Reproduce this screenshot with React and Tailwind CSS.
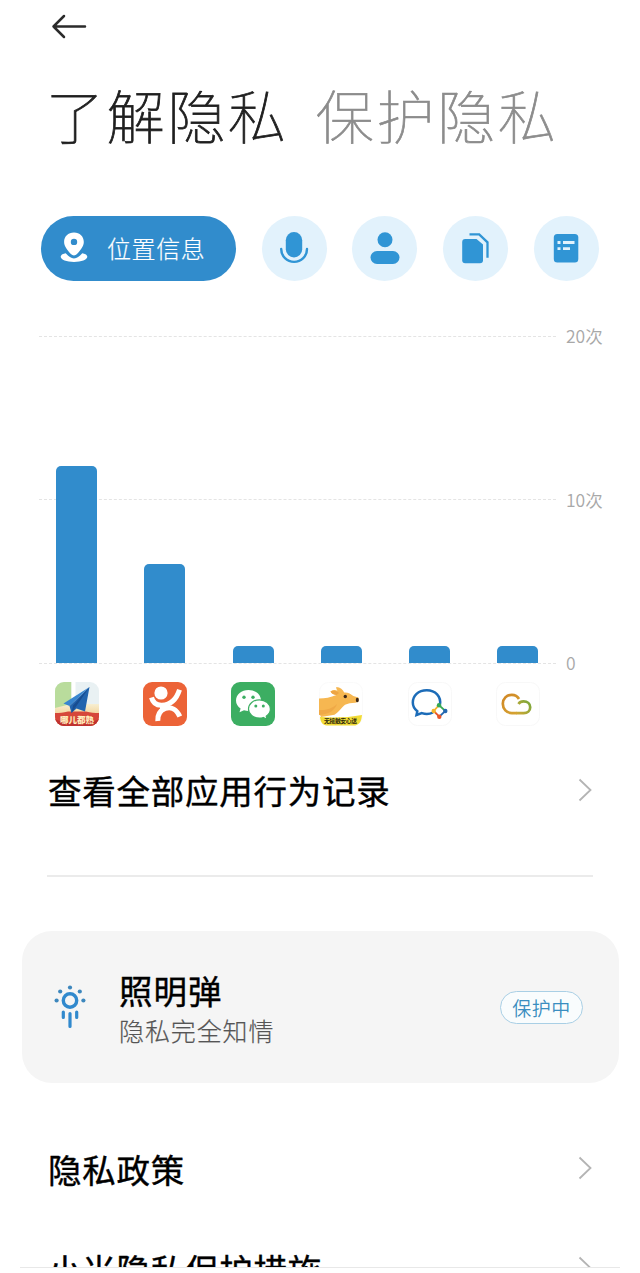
import clsx from "clsx";

const MAX_COUNT = 20;

function PinIcon() {
  return (
    <svg className="mb-[2px] h-8 w-8" viewBox="0 0 32 32" fill="none">
      <path
        fill="white"
        fillRule="evenodd"
        d="M16 1.500c-5.900 0-9.900 4.100-9.900 9.500 0 4.400 3.500 8.400 6.800 12 1.700 1.900 4.400 1.900 6.100 0 3.300-3.600 6.800-7.600 6.800-12 0-5.400-4-9.500-9.800-9.500Zm0 6.200a3.200 3.200 0 1 1 0 6.400 3.200 3.200 0 0 1 0-6.400Z"
      />
      <path
        fill="white"
        d="M7.700 22.300c-3 .5-5 1.700-5 3.400 0 2.900 6 5.200 13.300 5.200s13.300-2.300 13.300-5.200c0-1.700-2-2.900-5-3.400-1.600 1.800-2.900 2.800-4.200 3.800-2.500 1.900-5.700 1.900-8.200 0-1.300-1-2.600-2-4.200-3.800Z"
      />
    </svg>
  );
}

function MicIcon() {
  return (
    <svg className="h-8 w-8" viewBox="0 0 32 32" fill="none">
      <rect x="7.800" y="0" width="16.400" height="25.500" rx="8.200" fill="#3095d5" />
      <path d="M3.200 17a12.900 12.900 0 0 0 25.800 0" stroke="#3095d5" strokeWidth="2.400" strokeLinecap="round" />
    </svg>
  );
}

function PersonIcon() {
  return (
    <svg className="h-8 w-8" viewBox="0 0 32 32" fill="#3095d5">
      <circle cx="16" cy="7.700" r="7.500" />
      <rect x="1.500" y="19" width="29" height="13" rx="6.500" />
    </svg>
  );
}

function CopyIcon() {
  return (
    <svg className="h-8 w-8" viewBox="0 0 32 32" fill="none">
      <path fill="#3095d5" d="M5.200 7h11.300l6.500 5.500v15.700a3 3 0 0 1-3 3H5.200a3 3 0 0 1-3-3V10a3 3 0 0 1 3-3Z" />
      <path d="M9.500 2.300h9.700l8.300 8v15.500" stroke="#3095d5" strokeWidth="2.300" />
    </svg>
  );
}

function NoteIcon() {
  return (
    <svg className="h-8 w-8" viewBox="0 0 32 32" fill="none">
      <rect x="3.800" y="2" width="24.500" height="28.500" rx="3.500" fill="#3095d5" />
      <path d="M7.500 10.500h3M13 10.500h11.500M7.500 16.600h3M13 16.600h7" stroke="#e2f2fc" strokeWidth="2.800" />
    </svg>
  );
}

function MapAppIcon() {
  return (
    <svg className="h-11 w-11" viewBox="0 0 44 44">
      <clipPath id="mapClip">
        <rect width="44" height="44" rx="9" />
      </clipPath>
      <linearGradient id="mapGlow" x1="0" y1="0" x2="0" y2="1">
        <stop offset="0" stopColor="#f7efd2" />
        <stop offset="1" stopColor="#f0b75e" />
      </linearGradient>
      <g clipPath="url(#mapClip)">
        <rect width="44" height="44" fill="#e9f1f3" />
        <path d="M0 0h16.500v28H0Z" fill="#b9dc9c" />
        <path d="M16.500 0h4v20h-4Z" fill="#fff" />
        <path d="M0 26 16 22h28v22H0Z" fill="url(#mapGlow)" />
        <path d="M0 31c5 0 8-.5 13-1.500h18c5 1 8 1.500 13 1.500v13H0Z" fill="#d6473a" />
        <path d="M0 37c9 5 35 5 44 0v7H0Z" fill="#bf3230" />
        <path d="M34.500 5 8.500 21.500l6 2.500Z" fill="#3886d0" />
        <path d="M34.500 5 14.500 24l2 7 5-4.500 8.500 3Z" fill="#2264ae" />
        <path d="m34.500 5-18 26 1.500-7.500Z" fill="#184d91" />
        <text x="22" y="40.500" textAnchor="middle" fontSize="8.500" fontWeight="900" fill="#ffedbd">
          哪儿都熟
        </text>
      </g>
    </svg>
  );
}

function ReviewAppIcon() {
  return (
    <svg className="h-11 w-11" viewBox="0 0 44 44" fill="none">
      <rect width="44" height="44" rx="9" fill="#ec6337" />
      <circle cx="18" cy="11" r="6.600" fill="white" />
      <path d="M8.500 15.500c1.500 5.500 5 8 10.500 7.700 8.500-.4 14.500-6 17.500-15.500" stroke="white" strokeWidth="5" />
      <path d="M14.800 39c-.4-6 2.200-10.500 7.500-12.500 6-2.200 11.500 1.300 14.500 8" stroke="white" strokeWidth="5" />
      <path d="m17 23 8-2.500 2 4-5 4-5 1Z" fill="white" />
    </svg>
  );
}

function WechatIcon() {
  return (
    <svg className="h-11 w-11" viewBox="0 0 44 44">
      <rect width="44" height="44" rx="9" fill="#3cae62" />
      <path d="M17.500 8C10.500 8 5 12.600 5 18.500c0 3.300 1.800 6.200 4.600 8.100L8.500 30.300l4.500-2.100c1.500.5 3 .7 4.600.7C24.500 28.900 30 24.200 30 18.400S24.500 8 17.500 8Z" fill="#fff" />
      <circle cx="13" cy="15.300" r="1.700" fill="#3cae62" />
      <circle cx="22" cy="15.300" r="1.700" fill="#3cae62" />
      <path
        d="M28.500 17.800c-6.200 0-11 4-11 9.200s4.800 9.100 11 9.100c1.300 0 2.600-.2 3.800-.6l3.800 2-.9-3.300c2.600-1.700 4.200-4.300 4.200-7.200 0-5.200-4.900-9.200-10.900-9.200Z"
        fill="#fff"
        stroke="#3cae62"
        strokeWidth="1.200"
      />
      <circle cx="24.800" cy="24" r="1.500" fill="#3cae62" />
      <circle cx="32.300" cy="24" r="1.500" fill="#3cae62" />
    </svg>
  );
}

function KangarooIcon() {
  return (
    <svg className="h-11 w-11" viewBox="0 0 44 44">
      <rect x="0.500" y="0.500" width="43" height="43" rx="9" fill="#fff" stroke="#fafafa" />
      <path
        d="M0 16.500c6 0 11.500-1 17.500-3.500-3.500-.5-5.500-2-6-3.500 2-1.500 4.500-1.800 7-.8-1-1.200-1.500-2.500-1.200-3.700 4 .2 6.700 2.500 7.900 5.500 3.800-.3 6.600 1.500 9.100 3.500l5 1.500c1.500 3-.2 5-3 5.200-4 .3-7.500.6-10.300 2.100-4 3-5.500 7-10.500 10L2 35c-1-2-2-4-2-7Z"
        fill="#f6b751"
      />
      <path d="M17.500 13c-3.500-.5-5.500-2-6-3.500 3-1.200 6-.8 8.500 1.500Z" fill="#eda545" />
      <path d="M0 28c6 .5 13-1 18-6-2 6-7 10-18 11Z" fill="#efa947" />
      <circle cx="26.300" cy="14.500" r="1.700" fill="#3b2719" />
      <ellipse cx="38.300" cy="18" rx="1.500" ry="2.200" fill="#3b2719" />
      <path d="M1 35c13 1 29 .5 42-2-.5 6-2 9-6.500 10.500H8C3.500 43 1.500 40 1 35Z" fill="#f2dc37" />
      <text x="21.500" y="41" textAnchor="middle" fontSize="5.800" fontWeight="700" fill="#2c270b" textLength="33">
        无接触安心送
      </text>
    </svg>
  );
}

function WorkChatIcon() {
  return (
    <svg className="h-11 w-11" viewBox="0 0 44 44" fill="none">
      <rect x="0.500" y="0.500" width="43" height="43" rx="9" fill="#fff" stroke="#f8f8f8" />
      <path
        d="M32 22.500c1.200-8-4.500-14.300-13.200-14.300S4.800 13.700 4.800 20.500c0 3.500 1.700 6.500 4.500 8.700L8.500 33l5.300-1.900c4 1.300 8 1 11.200-.6"
        stroke="#1c6cb8"
        strokeWidth="2.500"
      />
      {/* Four linked people in the corner */}
      <path d="m31 23.200 6.300 5.800" stroke="#35a853" strokeWidth="1.800" />
      <path d="m37.300 29-6 5.700" stroke="#2468b1" strokeWidth="1.800" />
      <path d="m31.300 34.700-5.600-5.700" stroke="#e95528" strokeWidth="1.800" />
      <path d="m25.700 29 5.300-5.800" stroke="#f4b42b" strokeWidth="1.800" />
      <circle cx="31" cy="23.200" r="2.200" fill="#35a853" />
      <circle cx="37.300" cy="29" r="2.200" fill="#2468b1" />
      <circle cx="31.300" cy="34.700" r="2.200" fill="#e95528" />
      <circle cx="25.700" cy="29" r="2.200" fill="#f4b42b" />
    </svg>
  );
}

function CloudIcon() {
  return (
    <svg className="h-11 w-11" viewBox="0 0 44 44" fill="none">
      <defs>
        <linearGradient id="cloudLeft" x1="6" y1="12" x2="24" y2="32" gradientUnits="userSpaceOnUse">
          <stop stopColor="#d08524" />
          <stop offset="1" stopColor="#d6a633" />
        </linearGradient>
        <linearGradient id="cloudRight" x1="20" y1="32" x2="34" y2="20" gradientUnits="userSpaceOnUse">
          <stop stopColor="#d6a633" />
          <stop offset="1" stopColor="#7aa83b" />
        </linearGradient>
      </defs>
      <rect x="0.500" y="0.500" width="43" height="43" rx="9" fill="#fff" stroke="#f8f8f8" />
      <path d="M23 17c-1.500-2.800-4.200-4.200-7.200-4.200-5.200 0-9 3.900-9 9s3.800 9.300 9 9.300H21" stroke="url(#cloudLeft)" strokeWidth="2.700" />
      <path d="M22.500 22c1-1.700 2.700-2.600 5-2.600 3.900 0 6.700 2.400 6.700 5.800 0 3.600-2.700 5.900-6.500 5.900H20.500" stroke="url(#cloudRight)" strokeWidth="2.700" />
    </svg>
  );
}

function FlareIcon() {
  return (
    <svg className="h-11 w-8 shrink-0" viewBox="0 0 32 44" fill="none">
      <circle cx="16" cy="15.500" r="6.700" stroke="#3189cd" strokeWidth="3.400" />
      <g fill="#3d87bd">
        <circle cx="16" cy="2.500" r="2.100" />
        <circle cx="6.200" cy="6.500" r="2.100" />
        <circle cx="25.800" cy="6.500" r="2.100" />
        <circle cx="2.600" cy="15.500" r="2.100" />
        <circle cx="29.400" cy="15.500" r="2.100" />
      </g>
      <path d="M16 28.500v13M9.300 27v5.500M22.700 27v5.500" stroke="#3189cd" strokeWidth="3.200" strokeLinecap="round" />
    </svg>
  );
}

function Chevron() {
  return (
    <svg className="h-6 w-4 shrink-0" viewBox="0 0 16 24" fill="none">
      <path d="M2.500 1.500 13.500 12l-11 10.500" stroke="#b4b4b4" strokeWidth="1.800" />
    </svg>
  );
}

const tabs = [
  { name: "mic", Icon: MicIcon },
  { name: "contacts", Icon: PersonIcon },
  { name: "clipboard", Icon: CopyIcon },
  { name: "notes", Icon: NoteIcon },
];

const apps = [
  { name: "map", count: 12, Icon: MapAppIcon },
  { name: "review", count: 6, Icon: ReviewAppIcon },
  { name: "wechat", count: 1, Icon: WechatIcon },
  { name: "delivery", count: 1, Icon: KangarooIcon },
  { name: "work", count: 1, Icon: WorkChatIcon },
  { name: "cloud", count: 1, Icon: CloudIcon },
];

const gridLines = ["20次", "10次", "0"];

function UsageChart() {
  return (
    <section className="mt-[43px] pl-[39px]">
      <div className="grid h-[352px]">
        {/* Grid lines and their labels */}
        <div className="col-start-1 row-start-1 flex h-[352px] flex-col justify-between">
          {gridLines.map((label) => (
            <div key={label} className="flex h-[25px] items-center">
              <div className="w-[517px] border-t border-dashed border-[#e4e4e4]" />
              <span className="ml-[10px] text-[17.500px] leading-none font-[350] text-[#a8a8a8]">{label}</span>
            </div>
          ))}
        </div>
        {/* Bars */}
        <div className="col-start-1 row-start-1 mt-[12px] flex h-[327px] items-end gap-[47.300px] pl-[17px]">
          {apps.map((app) => (
            <div
              key={app.name}
              className="w-[41px] rounded-t-[5px] bg-[#318ccc]"
              style={{ height: `${(app.count / MAX_COUNT) * 100}%` }}
            />
          ))}
        </div>
      </div>
      <div className="mt-[6.500px] flex gap-[44.300px] pl-[15.500px]">
        {apps.map(({ name, Icon }) => (
          <Icon key={name} />
        ))}
      </div>
    </section>
  );
}

function LinkRow({ label, className }) {
  return (
    <div className={clsx("flex h-12 items-center justify-between pr-[47px] pl-12", className)}>
      <span className="mt-px text-[33.500px] leading-none font-normal tracking-[0.750px] text-black [-webkit-text-stroke:0.4px_black]">
        {label}
      </span>
      <Chevron />
    </div>
  );
}

export default function App() {
  return (
    <div className="h-[1273px] w-[640px] overflow-hidden bg-white font-['Noto_Sans_CJK_SC',sans-serif]">
      <main className="h-[1267px] overflow-hidden">
        <header className="h-[50px] pt-[13px] pl-[51px]">
          <svg className="h-7 w-9" viewBox="0 0 36 28" fill="none">
            <path
              d="M34 13.500H2.500M13 3 2.500 13.500 13 24"
              stroke="#2b2b2b"
              strokeWidth="2.500"
              strokeLinecap="round"
              strokeLinejoin="round"
            />
          </svg>
        </header>

        <h1 className="flex h-[128px] items-center gap-[27px] pl-[46px] text-[58px] leading-none font-thin tracking-[2.700px] whitespace-nowrap">
          <span className="text-[#1f1f1f] [-webkit-text-stroke:0.8px_#1f1f1f]">了解隐私</span>
          <span className="text-[#8c8c8c] [-webkit-text-stroke:0.7px_#8c8c8c]">保护隐私</span>
        </h1>

        <nav className="mt-[37.500px] flex h-[65px] gap-[25.700px] pl-[41px]">
          <div className="flex w-[195px] items-center gap-[17px] rounded-full bg-[#318ccc] pl-[17px]">
            <PinIcon />
            <span className="text-[24px] leading-none font-light tracking-[0.600px] text-white [-webkit-text-stroke:0.2px_white]">
              位置信息
            </span>
          </div>
          {tabs.map(({ name, Icon }) => (
            <div key={name} className="flex w-[65px] items-center justify-center rounded-full bg-[#e2f2fc]">
              <Icon />
            </div>
          ))}
        </nav>

        <UsageChart />

        <LinkRow label="查看全部应用行为记录" className="mt-[39.500px]" />

        <hr className="mt-[61px] mr-[47px] ml-[47px] border-t-2 border-[#ebebeb]" />

        <section className="mt-[54.500px] ml-[22px] flex h-[152px] w-[597px] items-center rounded-[30px] bg-[#f5f5f5] pr-[36px] pl-[32px]">
          <FlareIcon />
          <div className="mt-[5px] ml-[33px] flex-1">
            <div className="text-[33.500px] leading-[40px] font-normal tracking-[1px] text-black [-webkit-text-stroke:0.4px_black]">
              照明弹
            </div>
            <div className="text-[25px] leading-[40px] font-light tracking-[0.900px] text-[#555555] [-webkit-text-stroke:0.2px_#555555]">
              隐私完全知情
            </div>
          </div>
          <span className="flex h-[33px] w-[83px] items-center justify-center rounded-full border border-[#a9cfe5] bg-[#f9fcfd] text-[19px] leading-none font-[350] tracking-[0.500px] text-[#3a8dc0]">
            保护中
          </span>
        </section>

        <LinkRow label="隐私政策" className="mt-[61px]" />
        <LinkRow label="小米隐私保护措施" className="mt-[52px]" />
      </main>
      <div className="mr-5 ml-5 h-px bg-[#e8e8e8]" />
    </div>
  );
}
